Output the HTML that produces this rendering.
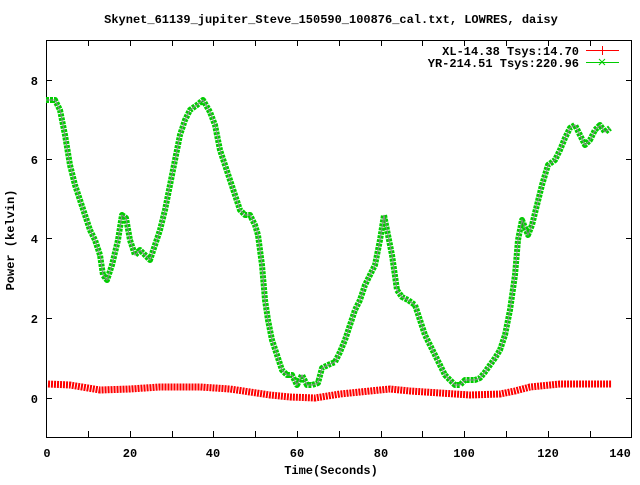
<!DOCTYPE html>
<html><head><meta charset="utf-8"><style>
html,body{margin:0;padding:0;background:#fff;}
svg text{font-family:"Liberation Mono",monospace;font-size:12px;font-weight:bold;fill:#000;}
</style></head><body>
<svg width="640" height="480" viewBox="0 0 640 480" xmlns="http://www.w3.org/2000/svg">
<rect width="640" height="480" fill="#fff"/>
<text x="331" y="23" text-anchor="middle">Skynet_61139_jupiter_Steve_150590_100876_cal.txt, LOWRES, daisy</text>
<!-- axes box -->
<rect x="46.5" y="40.5" width="585" height="397" fill="none" stroke="#000" stroke-width="1"/>
<g stroke="#000" stroke-width="1">
<path d="M88.5 40v6M88.5 437v-6M130.5 40v6M130.5 437v-6M172.5 40v6M172.5 437v-6M213.5 40v6M213.5 437v-6M255.5 40v6M255.5 437v-6M297.5 40v6M297.5 437v-6M339.5 40v6M339.5 437v-6M381.5 40v6M381.5 437v-6M422.5 40v6M422.5 437v-6M464.5 40v6M464.5 437v-6M506.5 40v6M506.5 437v-6M548.5 40v6M548.5 437v-6M590.5 40v6M590.5 437v-6"/>
<path d="M46 80.5h6M632 80.5h-6M46 159.5h6M632 159.5h-6M46 238.5h6M632 238.5h-6M46 318.5h6M632 318.5h-6M46 398.5h6M632 398.5h-6"/>
</g>
<g text-anchor="end">
<text x="38" y="85">8</text><text x="38" y="164">6</text><text x="38" y="243">4</text><text x="38" y="323">2</text><text x="38" y="403">0</text>
</g>
<g text-anchor="middle">
<text x="47" y="457">0</text><text x="130" y="457">20</text><text x="213" y="457">40</text><text x="297" y="457">60</text><text x="381" y="457">80</text><text x="464" y="457">100</text><text x="548" y="457">120</text><text x="620" y="457">140</text>
<text x="331" y="474">Time(Seconds)</text>
<text transform="translate(14,240) rotate(-90)">Power (kelvin)</text>
</g>
<!-- legend -->
<g text-anchor="end"><text x="579" y="55">XL-14.38 Tsys:14.70</text><text x="579" y="67">YR-214.51 Tsys:220.96</text></g>
<path d="M586 50.5h33M602.5 46v9" stroke="#f00" stroke-width="1"/>
<path d="M586 62.5h33M599 59l6 6M605 59l-6 6" stroke="#0c0" stroke-width="1"/>
<!-- red curve -->
<polyline fill="none" stroke="#f00" stroke-width="7" stroke-dasharray="2 1" points="48,384 70,385 100,390 130,389 160,387 200,387 230,389 250,392 270,395 290,397 315,398 340,394 370,391 390,389 410,391 440,393 470,395 500,394 515,391 530,387 560,384 612,384"/>
<!-- green curve -->
<polyline fill="none" stroke="#0c0" stroke-width="6" stroke-dasharray="3 1" stroke-linejoin="round" points="46,100 55,100 60,110 65,135 70,165 75,185 80,200 85,215 90,230 95,240 100,255 103,275 107,280 112,265 118,240 122,215 126,218 130,240 135,255 140,250 145,255 150,260 155,245 160,230 165,210 170,185 175,160 180,135 185,120 190,110 197,105 203,100 210,112 215,125 220,150 225,165 230,180 235,195 240,210 245,215 250,215 255,225 258,235 262,265 265,300 268,320 272,340 277,355 282,370 287,375 292,375 297,385 302,375 307,385 312,385 318,383 322,368 328,365 335,362 340,352 345,340 350,325 355,310 360,300 365,285 370,275 375,265 380,240 384,215 388,235 392,255 397,290 402,297 408,300 415,305 420,320 425,335 430,345 435,355 440,365 445,375 450,380 455,385 460,385 465,380 470,380 475,380 480,378 485,372 490,365 495,358 500,350 505,335 510,310 515,275 518,240 522,220 528,235 532,225 537,205 542,185 548,165 555,160 560,150 565,138 570,128 575,125 580,135 585,145 590,140 595,130 600,125 605,132 610,128"/>
<polyline fill="none" stroke="#888" stroke-width="1" points="46,100 55,100 60,110 65,135 70,165 75,185 80,200 85,215 90,230 95,240 100,255 103,275 107,280 112,265 118,240 122,215 126,218 130,240 135,255 140,250 145,255 150,260 155,245 160,230 165,210 170,185 175,160 180,135 185,120 190,110 197,105 203,100 210,112 215,125 220,150 225,165 230,180 235,195 240,210 245,215 250,215 255,225 258,235 262,265 265,300 268,320 272,340 277,355 282,370 287,375 292,375 297,385 302,375 307,385 312,385 318,383 322,368 328,365 335,362 340,352 345,340 350,325 355,310 360,300 365,285 370,275 375,265 380,240 384,215 388,235 392,255 397,290 402,297 408,300 415,305 420,320 425,335 430,345 435,355 440,365 445,375 450,380 455,385 460,385 465,380 470,380 475,380 480,378 485,372 490,365 495,358 500,350 505,335 510,310 515,275 518,240 522,220 528,235 532,225 537,205 542,185 548,165 555,160 560,150 565,138 570,128 575,125 580,135 585,145 590,140 595,130 600,125 605,132 610,128"/>
</svg>
</body></html>
